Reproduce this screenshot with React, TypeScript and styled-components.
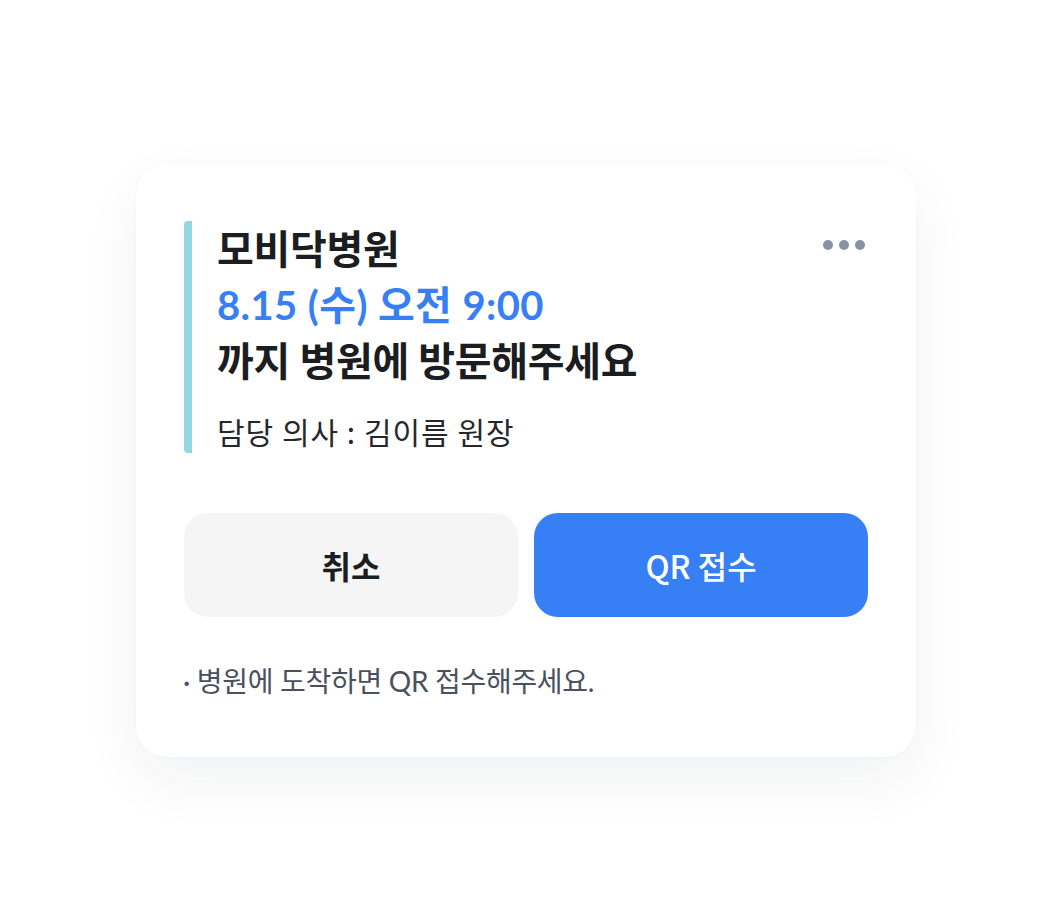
import styled, { createGlobalStyle } from "styled-components";

const GlobalStyle = createGlobalStyle`
  html, body {
    margin: 0;
    padding: 0;
    background: #ffffff;
  }
  body {
    font-family: "Noto Sans CJK KR", "Noto Sans", sans-serif;
  }
`;

const Page = styled.div`
  width: 1052px;
  height: 920px;
  display: flex;
  justify-content: center;
  align-items: center;
`;

const Card = styled.div`
  width: 780px;
  box-sizing: border-box;
  padding: 57px 48px 56px 48px;
  background: #ffffff;
  border-radius: 32px;
  box-shadow: 0 24px 60px rgba(20, 30, 50, 0.06), 0 0 6px rgba(20, 30, 50, 0.02);
  display: flex;
  flex-direction: column;
`;

const Header = styled.div`
  display: flex;
  justify-content: space-between;
  align-items: flex-start;
`;

const Info = styled.div`
  display: flex;
  flex-direction: column;
  border-left: 8px solid #92d6df;
  border-radius: 4px;
  padding-left: 25px;
`;

const Title = styled.div<{ $color?: string; $spacing?: string }>`
  font-family: "Lato", "Noto Sans CJK KR", sans-serif;
  font-size: 40px;
  font-weight: 700;
  line-height: 56px;
  letter-spacing: ${(p) => p.$spacing || "-0.3px"};
  color: ${(p) => p.$color || "#1c1d21"};
`;

const Doctor = styled.div`
  margin-top: 20px;
  font-size: 30px;
  line-height: 44px;
  letter-spacing: 1px;
  color: #26272b;
`;

const More = styled.button`
  border: none;
  background: none;
  padding: 0;
  height: 10px;
  margin-top: 19px;
  margin-right: 3px;
  display: flex;
  gap: 6px;
  cursor: pointer;
`;

const Dot = styled.span`
  width: 10px;
  height: 10px;
  border-radius: 50%;
  background: #8a93a3;
`;

const Buttons = styled.div`
  display: grid;
  grid-template-columns: 1fr 1fr;
  gap: 16px;
  margin-top: 60px;
`;

const ActionButton = styled.button<{ $primary?: boolean }>`
  height: 104px;
  border: none;
  border-radius: 24px;
  font-family: "Noto Sans CJK KR", sans-serif;
  font-size: 32px;
  font-weight: ${(p) => (p.$primary ? 500 : 700)};
  color: ${(p) => (p.$primary ? "#ffffff" : "#1c1d21")};
  background: ${(p) => (p.$primary ? "#377ff5" : "#f5f5f5")};
  cursor: pointer;
`;

const Note = styled.div`
  margin-top: 44px;
  margin-left: -1px;
  font-family: "Lato", "Noto Sans CJK KR", sans-serif;
  font-size: 28px;
  line-height: 40px;
  color: #4a5060;
  letter-spacing: -0.3px;
`;

export default function App() {
  return (
    <>
      <GlobalStyle />
      <Page>
        <Card>
          <Header>
            <Info>
              <Title>모비닥병원</Title>
              <Title $color="#377ff5" $spacing="0.4px">
                8.15 (수) 오전 9:00
              </Title>
              <Title>까지 병원에 방문해주세요</Title>
              <Doctor>담당 의사 : 김이름 원장</Doctor>
            </Info>
            <More aria-label="더보기">
              <Dot />
              <Dot />
              <Dot />
            </More>
          </Header>
          <Buttons>
            <ActionButton>취소</ActionButton>
            <ActionButton $primary>QR 접수</ActionButton>
          </Buttons>
          <Note>· 병원에 도착하면 QR 접수해주세요.</Note>
        </Card>
      </Page>
    </>
  );
}
